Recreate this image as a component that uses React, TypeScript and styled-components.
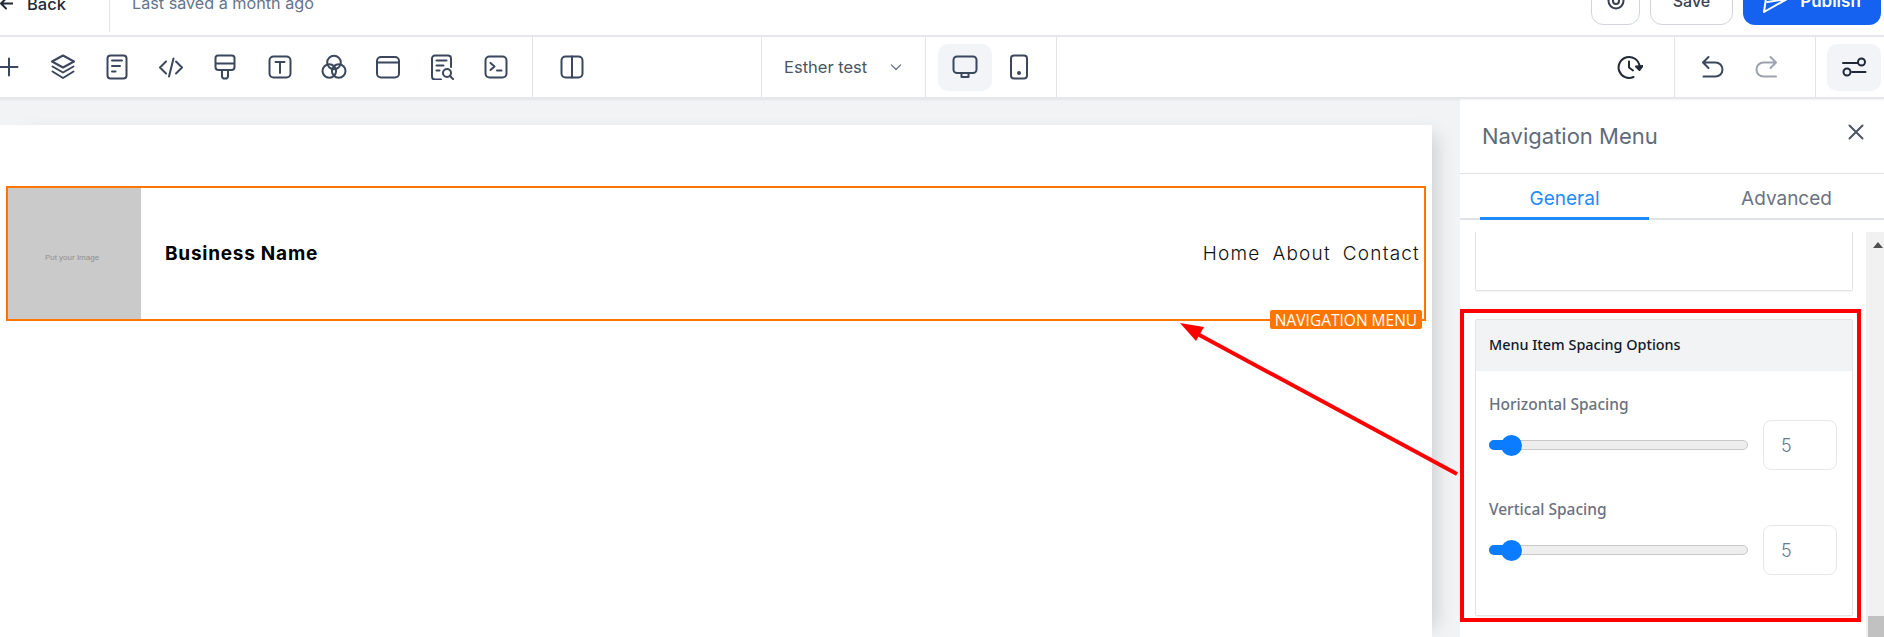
import React, { FC } from 'react';
import styled, { createGlobalStyle } from 'styled-components';

const GlobalStyle = createGlobalStyle`
  html, body {
    margin: 0;
    padding: 0;
    background: #fff;
    font-family: Inter, "Noto Sans", sans-serif;
  }
  * {
    box-sizing: border-box;
  }
`;

const Root = styled.div`
  position: relative;
  width: 1884px;
  height: 637px;
  overflow: hidden;
  display: flex;
  flex-direction: column;
`;

/* header is cut by the top of the screenshot, so it starts above the page */
const TopBar = styled.header`
  flex: none;
  height: 61px;
  margin-top: -24px;
  display: flex;
  align-items: stretch;
  background: #fff;
  border-bottom: 2px solid #e5e7eb;
`;

const BackLink = styled.div`
  width: 110px;
  display: flex;
  align-items: center;
  gap: 14px;
  padding-top: 11px;
  padding-bottom: 12px;
  border-right: 1px solid #e5e7eb;
  margin-bottom: 3px;
  font-size: 16.5px;
  font-weight: 500;
  color: #1f2937;
`;

const SavedText = styled.div`
  margin-left: 22px;
  padding-top: 17px;
  font-size: 16.2px;
  line-height: 20px;
  color: #64748b;
`;

const TopActions = styled.div`
  margin-left: auto;
  height: 48.5px;
  display: flex;
  gap: 10px;
  padding-right: 3px;
`;

const OutlineButton = styled.button<{ $width: number }>`
  width: ${(p) => p.$width}px;
  display: flex;
  align-items: center;
  justify-content: center;
  padding: 2px 0 0;
  border: 1px solid #d1d5db;
  border-radius: 12px;
  background: #fff;
  font: 500 16px Inter, sans-serif;
  color: #374151;
`;

const PublishButton = styled.button`
  width: 138px;
  display: flex;
  align-items: center;
  justify-content: center;
  gap: 13px;
  padding: 2px 0 0;
  border: 0;
  border-radius: 12px;
  background: #1662f0;
  font: 600 17px Inter, sans-serif;
  color: #fff;
`;

const ToolBar = styled.div`
  flex: none;
  height: 62px;
  display: flex;
  align-items: stretch;
  background: #fff;
  border-bottom: 2px solid #e5e7eb;
  box-shadow: 0 1px 2px rgba(0, 0, 0, 0.06);
  position: relative;
  z-index: 1;
`;

const ToolGroup = styled.div<{ $width?: number; $pl?: number; $pr?: number; $ml?: number; $last?: boolean }>`
  flex: none;
  display: flex;
  align-items: center;
  ${(p) => (p.$width ? `width: ${p.$width}px;` : '')}
  padding-left: ${(p) => p.$pl ?? 0}px;
  padding-right: ${(p) => p.$pr ?? 0}px;
  ${(p) => (p.$ml !== undefined ? `margin-left: ${p.$ml}px;` : '')}
  ${(p) => (p.$last ? '' : 'border-right: 1px solid #e2e4e8;')}
`;

const ToolCell = styled.div<{ $active?: boolean; $width?: number; $tone?: string }>`
  flex: none;
  width: ${(p) => p.$width ?? 54}px;
  height: 47px;
  display: flex;
  align-items: center;
  justify-content: center;
  border-radius: 10px;
  background: ${(p) => (p.$active ? '#f2f4f8' : 'transparent')};
  color: ${(p) => p.$tone ?? '#3b475c'};
`;

const ThemeSelect = styled(ToolGroup)`
  justify-content: space-between;
  padding-left: 22px;
  padding-right: 22px;
  font-size: 16.5px;
  color: #4b5563;
  svg {
    color: #6b7280;
  }
`;

const Spacer = styled.div`
  flex: 1;
`;

const Workspace = styled.div`
  flex: 1;
  min-height: 0;
  display: flex;
`;

const Canvas = styled.main`
  width: 1460px;
  padding: 26px 28px 0 0;
  background: #f2f3f5;
`;

const PageSheet = styled.div`
  height: 100%;
  padding: 61px 6px 0;
  background: #fff;
  box-shadow: 14px 0 18px -10px rgba(0, 0, 0, 0.16);
`;

const NavSection = styled.section`
  position: relative;
  height: 135px;
  display: flex;
  align-items: center;
  border: 2px solid #ff7500;
  padding-right: 4px;
`;

const ImageHolder = styled.div`
  width: 133px;
  align-self: stretch;
  display: flex;
  align-items: center;
  justify-content: center;
  padding: 7px 5px 0 0;
  background: #cacaca;
  font: 8px "Liberation Sans", sans-serif;
  color: #8f8f8f;
`;

const BusinessName = styled.div`
  margin-left: 24px;
  font: 700 19px Inter, sans-serif;
  letter-spacing: 0.75px;
  color: #000;
`;

const NavLinks = styled.nav`
  margin-left: auto;
  display: flex;
  gap: 12px;
`;

const NavLink = styled.span`
  font: 300 19px Inter, sans-serif;
  letter-spacing: 1.2px;
  color: #111;
`;

const SectionTag = styled.div`
  position: absolute;
  right: 2px;
  bottom: -10px;
  width: 152px;
  height: 19px;
  display: flex;
  align-items: center;
  justify-content: center;
  border-radius: 2px;
  background: #ff7500;
  font: 15.5px "Open Sans", sans-serif;
  color: #fff;
  white-space: nowrap;
`;

const Panel = styled.aside`
  position: relative;
  flex: 1;
  min-width: 0;
  display: flex;
  flex-direction: column;
  background: #fff;
`;

const PanelHeader = styled.div`
  flex: none;
  height: 75px;
  display: flex;
  align-items: center;
  justify-content: space-between;
  padding: 0 20px 0 22px;
  border-bottom: 1px solid #dfe3e8;
  font-size: 22px;
  color: #5f6b7a;
`;

const CloseButton = styled.div`
  display: flex;
  margin-bottom: 8px;
  color: #4b5563;
`;

const Tabs = styled.div`
  flex: none;
  height: 46px;
  display: flex;
  padding-left: 20px;
  border-bottom: 2px solid #dfe3e8;
`;

const Tab = styled.div<{ $active?: boolean }>`
  width: ${(p) => (p.$active ? '169px' : '235px')};
  height: 46px;
  display: flex;
  align-items: center;
  justify-content: center;
  padding-left: ${(p) => (p.$active ? '0' : '40px')};
  padding-top: ${(p) => (p.$active ? '6px' : '3px')};
  font-size: 19px;
  color: ${(p) => (p.$active ? '#1d8cf8' : '#6b7280')};
  border-bottom: ${(p) => (p.$active ? '3px solid #1d8cf8' : '0')};
`;

const PanelScroll = styled.div`
  flex: 1;
  min-height: 0;
  display: flex;
  padding-top: 12px;
`;

const PanelColumn = styled.div`
  width: 406px;
  padding: 0 13px 0 15px;
`;

const ScrollBar = styled.div`
  position: relative;
  flex: 1;
  background: #f1f1f1;
`;

const ScrollArrow = styled.div`
  position: absolute;
  top: 10px;
  left: 7px;
  border-left: 5px solid transparent;
  border-right: 5px solid transparent;
  border-bottom: 6px solid #505050;
`;

const ScrollThumb = styled.div`
  position: absolute;
  left: 2px;
  right: 0;
  top: 384px;
  bottom: 0;
  background: #c1c1c1;
`;

const EmptyCard = styled.div`
  height: 59px;
  border: 1px solid #e2e4e8;
  border-top: 0;
  border-radius: 0 0 2px 2px;
  box-shadow: 0 1px 1px rgba(0, 0, 0, 0.05);
`;

const OptionsCard = styled.div`
  height: 297px;
  margin-top: 28px;
  border: 1px solid #e2e4e8;
  border-radius: 2px;
  box-shadow: 0 1px 1px rgba(0, 0, 0, 0.05);
`;

const CardHeader = styled.div`
  height: 51px;
  display: flex;
  align-items: center;
  padding: 0 0 2px 13px;
  background: #f2f3f5;
  font: 500 14.4px "Noto Sans", sans-serif;
  color: #111827;
`;

const CardBody = styled.div`
  padding: 23px 15px 0 13px;
  display: flex;
  flex-direction: column;
  gap: 29px;
`;

const Field = styled.div`
  display: flex;
  flex-direction: column;
  gap: 6px;
`;

const FieldLabel = styled.label`
  height: 20px;
  font: 500 15.5px/20px "Noto Sans", sans-serif;
  color: #6b7280;
`;

const SliderRow = styled.div`
  display: flex;
  align-items: center;
  justify-content: space-between;
`;

const SliderTrack = styled.div`
  position: relative;
  width: 259px;
  height: 10px;
  border: 1px solid #c6c8cc;
  border-radius: 5px;
  background: #eeeeee;
`;

const SliderFill = styled.div`
  position: absolute;
  left: -1px;
  top: -1px;
  bottom: -1px;
  border-radius: 5px 0 0 5px;
  background: #0b7cff;
`;

const SliderThumb = styled.div`
  position: absolute;
  top: 50%;
  width: 21px;
  height: 21px;
  margin-left: -10.5px;
  margin-top: -10.5px;
  border-radius: 50%;
  background: #0b7cff;
`;

const NumberBox = styled.div`
  width: 74px;
  height: 50px;
  display: flex;
  align-items: center;
  padding-left: 17px;
  border: 1px solid #e5e7eb;
  border-radius: 8px;
  font-size: 18px;
  font-weight: 300;
  color: #6b7a8a;
`;

const RedFrame = styled.div`
  position: absolute;
  left: 0;
  top: 210px;
  width: 401px;
  height: 313px;
  border: 4px solid #ff0000;
  pointer-events: none;
`;

const ArrowLayer = styled.svg`
  position: absolute;
  left: 0;
  top: 0;
  pointer-events: none;
`;

const IconSvg: FC<{ size?: number; children: React.ReactNode; width?: number }> = ({ size = 26, width, children }) => (
  <svg
    width={width ?? size}
    height={size}
    viewBox={`0 0 ${width ?? size} ${size}`}
    fill="none"
    stroke="currentColor"
    strokeWidth={2}
    strokeLinecap="round"
    strokeLinejoin="round"
  >
    {children}
  </svg>
);

const PlusIcon = () => (
  <IconSvg>
    <path d="M13 4.500v17M4.500 13h17" />
  </IconSvg>
);
const LayersIcon = () => (
  <IconSvg>
    <path d="M13 1.500 24 7.500 13 13.500 2 7.500z" />
    <path d="M2.500 12.500 13 18.500l10.500-6" />
    <path d="M2.500 17.500 13 24l10.500-6.500" />
  </IconSvg>
);
const DocIcon = () => (
  <IconSvg>
    <rect x="3.500" y="1.500" width="19" height="23" rx="3" />
    <path d="M8 6.500h10M8 12h8M8 17.500h3.500" />
  </IconSvg>
);
const CodeIcon = () => (
  <IconSvg>
    <path d="M8 7.500 2 13.500l6 6M18 7.500l6 6-6 6M15.500 4.500 11 22.500" />
  </IconSvg>
);
const BrushIcon = () => (
  <IconSvg>
    <path d="M6 1.500h14a2.500 2.500 0 0 1 2.500 2.500v9a3 3 0 0 1-3 3h-13a3 3 0 0 1-3-3V4A2.500 2.500 0 0 1 6 1.500zM3.500 9.500h19" />
    <path d="M10 16.500v6a2.500 2.500 0 0 0 2.500 2h1a2.500 2.500 0 0 0 2.500-2v-6" />
  </IconSvg>
);
const TextIcon = () => (
  <IconSvg>
    <rect x="2.500" y="2.500" width="21" height="21" rx="4" />
    <path d="M8.500 8h9M13 8v11" />
  </IconSvg>
);
const CirclesIcon = () => (
  <IconSvg>
    <circle cx="13" cy="8.500" r="6.800" />
    <circle cx="8.300" cy="17" r="6.800" />
    <circle cx="17.700" cy="17" r="6.800" />
  </IconSvg>
);
const WindowIcon = () => (
  <IconSvg>
    <rect x="2" y="3" width="22" height="20.500" rx="4" />
    <path d="M2 8.500h22" />
  </IconSvg>
);
const DocSearchIcon = () => (
  <IconSvg>
    <path d="M22 13V4.500a3 3 0 0 0-3-3H6a3 3 0 0 0-3 3v18a3 3 0 0 0 3 3h6" />
    <path d="M7.500 6.500h10M7.500 11.500h7M7.500 16.500h3" />
    <circle cx="18" cy="19" r="4" />
    <path d="m21 22 3 3" />
  </IconSvg>
);
const TerminalIcon = () => (
  <IconSvg>
    <rect x="2.500" y="2.500" width="21" height="21" rx="4" />
    <path d="m7.500 9 4 3.500-4 3.500M14 16.500h4.500" />
  </IconSvg>
);
const ColumnsIcon = () => (
  <IconSvg>
    <rect x="2.500" y="2.500" width="21" height="21" rx="4" />
    <path d="M13 2.500v21" />
  </IconSvg>
);
const ChevronIcon = () => (
  <IconSvg size={14}>
    <path d="m2.500 5 4.500 4.500L11.500 5" strokeWidth={1.2} />
  </IconSvg>
);
const MonitorIcon = () => (
  <IconSvg>
    <rect x="1.500" y="2.500" width="23" height="16.500" rx="3.500" />
    <path d="M9.500 19v4h7v-4" />
  </IconSvg>
);
const MobileIcon = () => (
  <IconSvg>
    <rect x="5" y="1.500" width="16" height="23" rx="3" />
    <circle cx="13" cy="19" r="1" fill="currentColor" />
  </IconSvg>
);
const HistoryIcon = () => (
  <IconSvg>
    <path d="M22.500 12A10.500 10.500 0 1 0 16.500 23" />
    <path d="M12 7.500v6l4 3" />
    <path d="m19 12.500 3.500 3.500 3-4z" fill="currentColor" />
  </IconSvg>
);
const UndoIcon = () => (
  <IconSvg>
    <path d="M9.500 3 4 8.500l5.500 5.500M4 8.500h12.500a6.500 6.500 0 0 1 0 14H4.500" />
  </IconSvg>
);
const RedoIcon = () => (
  <IconSvg>
    <path d="M16.500 3 22 8.500 16.500 14M22 8.500H9.500a6.500 6.500 0 0 0 0 14H22" />
  </IconSvg>
);
const SlidersIcon = () => (
  <IconSvg>
    <path d="M2 9h15M24.500 18H11" />
    <circle cx="20.500" cy="8" r="3.500" />
    <circle cx="6" cy="18" r="3.500" />
  </IconSvg>
);
const CloseIcon = () => (
  <IconSvg size={16}>
    <path d="m1.500 1.500 13 13M14.500 1.500l-13 13" />
  </IconSvg>
);
const BackArrowIcon = () => (
  <IconSvg size={13}>
    <path d="M12.500 6.500H1M6 1.500l-5 5 5 5" />
  </IconSvg>
);
const EyeIcon = () => (
  <IconSvg size={20}>
    <circle cx="10" cy="10" r="7.500" />
    <circle cx="10" cy="10" r="3" />
  </IconSvg>
);
const PlaneIcon = () => (
  <IconSvg size={24}>
    <path d="M1 23 4 2l20 8zM4.500 13 24 10" />
  </IconSvg>
);

const SpacingField: FC<{ label: string; value: number; percent: number }> = ({ label, value, percent }) => (
  <Field>
    <FieldLabel>{label}</FieldLabel>
    <SliderRow>
      <SliderTrack>
        <SliderFill style={{ width: `${percent}%` }} />
        <SliderThumb style={{ left: `${percent}%` }} />
      </SliderTrack>
      <NumberBox>{value}</NumberBox>
    </SliderRow>
  </Field>
);

const TOOL_ICONS = [
  PlusIcon,
  LayersIcon,
  DocIcon,
  CodeIcon,
  BrushIcon,
  TextIcon,
  CirclesIcon,
  WindowIcon,
  DocSearchIcon,
  TerminalIcon,
];

export default function App(): JSX.Element {
  return (
    <>
      <GlobalStyle />
      <Root>
        <TopBar>
          <BackLink>
            <BackArrowIcon />
            Back
          </BackLink>
          <SavedText>Last saved a month ago</SavedText>
          <TopActions>
            <OutlineButton $width={49}>
              <EyeIcon />
            </OutlineButton>
            <OutlineButton $width={83}>Save</OutlineButton>
            <PublishButton>
              <PlaneIcon />
              Publish
            </PublishButton>
          </TopActions>
        </TopBar>
        <ToolBar>
          <ToolGroup $width={551} $ml={-18} $pr={6}>
            {TOOL_ICONS.map((Icon, i) => (
              <ToolCell key={i} $width={54.1}>
                <Icon />
              </ToolCell>
            ))}
          </ToolGroup>
          <ToolGroup $width={229} $pl={12}>
            <ToolCell>
              <ColumnsIcon />
            </ToolCell>
          </ToolGroup>
          <ThemeSelect $width={164}>
            Esther test
            <ChevronIcon />
          </ThemeSelect>
          <ToolGroup $width={131} $pl={12}>
            <ToolCell $active>
              <MonitorIcon />
            </ToolCell>
            <ToolCell>
              <MobileIcon />
            </ToolCell>
          </ToolGroup>
          <Spacer />
          <ToolGroup $pr={17}>
            <ToolCell $tone="#1f2937">
              <HistoryIcon />
            </ToolCell>
          </ToolGroup>
          <ToolGroup $width={141} $pl={10}>
            <ToolCell $width={54.5}>
              <UndoIcon />
            </ToolCell>
            <ToolCell $width={54.5} $tone="#9ca3af">
              <RedoIcon />
            </ToolCell>
          </ToolGroup>
          <ToolGroup $pl={11} $pr={3} $last>
            <ToolCell $active $tone="#1f2937">
              <SlidersIcon />
            </ToolCell>
          </ToolGroup>
        </ToolBar>
        <Workspace>
          <Canvas>
            <PageSheet>
              <NavSection>
                <ImageHolder>Put your Image</ImageHolder>
                <BusinessName>Business Name</BusinessName>
                <NavLinks>
                  <NavLink>Home</NavLink>
                  <NavLink>About</NavLink>
                  <NavLink>Contact</NavLink>
                </NavLinks>
                <SectionTag>NAVIGATION MENU</SectionTag>
              </NavSection>
            </PageSheet>
          </Canvas>
          <Panel>
            <PanelHeader>
              Navigation Menu
              <CloseButton>
                <CloseIcon />
              </CloseButton>
            </PanelHeader>
            <Tabs>
              <Tab $active>General</Tab>
              <Tab>Advanced</Tab>
            </Tabs>
            <PanelScroll>
              <PanelColumn>
                <EmptyCard />
                <OptionsCard>
                  <CardHeader>Menu Item Spacing Options</CardHeader>
                  <CardBody>
                    <SpacingField label="Horizontal Spacing" value={5} percent={8.5} />
                    <SpacingField label="Vertical Spacing" value={5} percent={8.5} />
                  </CardBody>
                </OptionsCard>
              </PanelColumn>
              <ScrollBar>
                <ScrollArrow />
                <ScrollThumb />
              </ScrollBar>
            </PanelScroll>
            <RedFrame />
          </Panel>
        </Workspace>
        <ArrowLayer width={1884} height={637}>
          <path d="M1457 474 1192 331" stroke="#ff0000" strokeWidth={4} />
          <path d="M1180 323 1204 327 1196 341z" fill="#ff0000" />
        </ArrowLayer>
      </Root>
    </>
  );
}
